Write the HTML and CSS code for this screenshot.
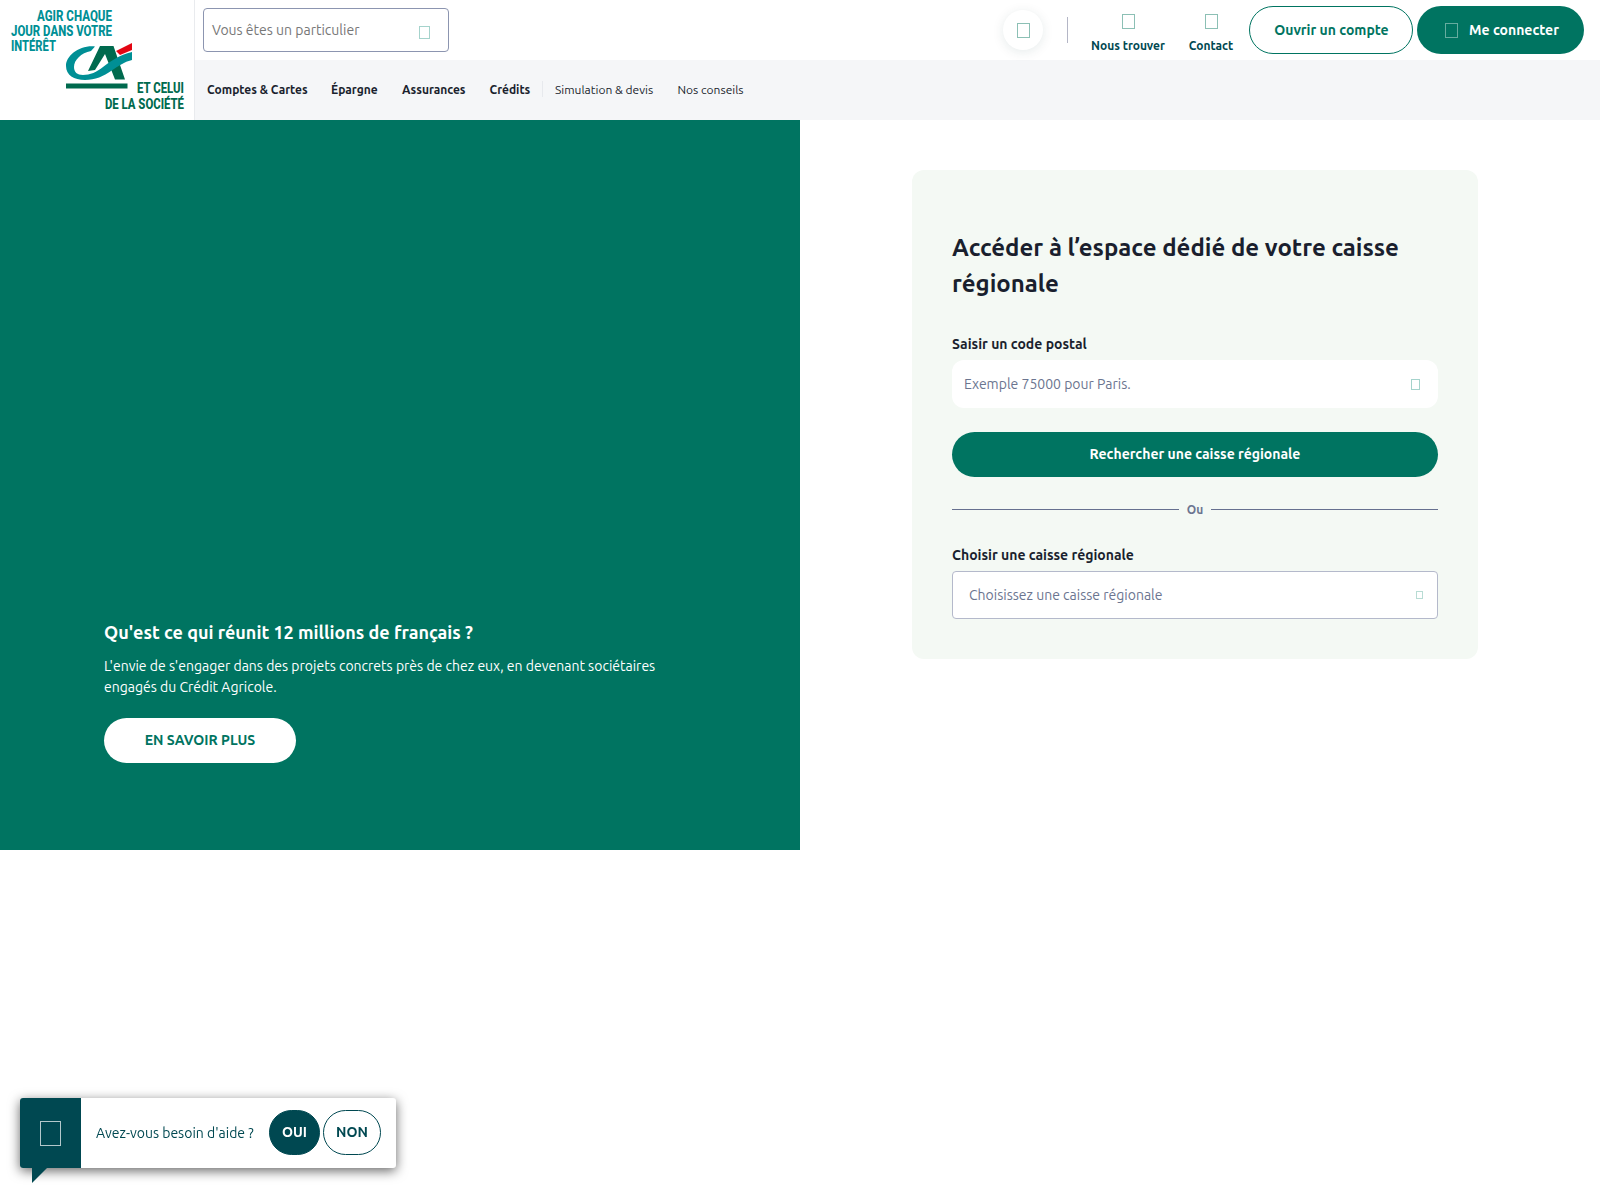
FILE: index.html
```html
<!DOCTYPE html>
<html lang="fr">
<head>
  <meta charset="UTF-8">
  <meta name="viewport" content="width=device-width, initial-scale=1.0">
  <title>Accéder à votre caisse régionale - Crédit Agricole</title>
  <link rel="stylesheet" href="styles.css">
</head>
<body>
  <header class="header">
    <a class="logo" href="#">
      <svg width="194" height="120" viewBox="0 0 194 120" role="img" aria-label="Crédit Agricole">
        <g class="logo-text" fill="#008f95">
          <text x="37" y="21" textLength="75" lengthAdjust="spacingAndGlyphs">AGIR CHAQUE</text>
          <text x="11" y="36" textLength="101" lengthAdjust="spacingAndGlyphs">JOUR DANS VOTRE</text>
          <text x="11" y="51" textLength="45" lengthAdjust="spacingAndGlyphs">INTÉRÊT</text>
        </g>
        <g class="logo-text" fill="#006a4e">
          <text x="137" y="93" textLength="47" lengthAdjust="spacingAndGlyphs">ET CELUI</text>
          <text x="105" y="108.500" textLength="79" lengthAdjust="spacingAndGlyphs">DE LA SOCIÉTÉ</text>
        </g>
        <path fill="#006a4e" d="M100 46h13.500l11.500 33.500h-10L105 54 95 70l-7 1z"/>
        <path fill="#008f95" d="M91 51l4-4.500C79 45 66 56 66 66c0 9 8 14 19 14 10 0 19-4 26-9 7-5 13-9 21-11v-8c-13 3-21 9-29 15-6 5-13 8-20 8-6 0-9-3-9-8 0-7 7-14 17-16z"/>
        <path fill="#e30613" d="M116 51l16-8v7l-12 5z"/>
        <path fill="#006a4e" d="M66 83.500h61.500v5H66z"/>
      </svg>
    </a>
    <div class="header-main">
      <div class="topbar">
        <div class="profile-select"><span>Vous êtes un particulier</span><i class="glyph glyph-s"></i></div>
        <div class="actions">
          <button class="search" aria-label="Rechercher"><i class="glyph"></i></button>
          <span class="separator"></span>
          <a class="action find" href="#"><i class="glyph"></i><span>Nous trouver</span></a>
          <a class="action contact" href="#"><i class="glyph"></i><span>Contact</span></a>
          <a class="btn btn-outline" href="#">Ouvrir un compte</a>
          <a class="btn btn-login" href="#"><i class="glyph"></i><span>Me connecter</span></a>
        </div>
      </div>
      <nav class="nav">
        <a class="n1" href="#">Comptes &amp; Cartes</a>
        <a class="n2" href="#">Épargne</a>
        <a class="n3" href="#">Assurances</a>
        <a class="n4" href="#">Crédits</a>
        <span class="nav-sep"></span>
        <a class="light n5" href="#">Simulation &amp; devis</a>
        <a class="light n6" href="#">Nos conseils</a>
      </nav>
    </div>
  </header>

  <main class="page">
    <section class="hero">
      <h2>Qu'est ce qui réunit 12 millions de français ?</h2>
      <p>L'envie de s'engager dans des projets concrets près de chez eux, en devenant sociétaires<br>engagés du Crédit Agricole.</p>
      <a class="hero-btn" href="#">EN SAVOIR PLUS</a>
    </section>

    <section class="access">
      <form class="card">
        <h1>Accéder à l’espace dédié de votre caisse<br>régionale</h1>
        <label>Saisir un code postal</label>
        <div class="field"><span>Exemple 75000 pour Paris.</span><i class="glyph glyph-xs"></i></div>
        <button type="button" class="submit">Rechercher une caisse régionale</button>
        <div class="or"><span>Ou</span></div>
        <label>Choisir une caisse régionale</label>
        <div class="field field-select"><span>Choisissez une caisse régionale</span><i class="glyph glyph-xxs"></i></div>
      </form>
    </section>
  </main>

  <!-- Aide -->
  <aside class="help">
    <div class="help-icon"><i class="glyph glyph-l"></i></div>
    <span class="help-text">Avez-vous besoin d'aide ?</span>
    <button class="help-btn yes">OUI</button>
    <button class="help-btn no">NON</button>
  </aside>
</body>
</html>
```
FILE: styles.css
```css
* {
  box-sizing: border-box;
}
body {
  margin: 0;
  min-height: 100vh;
  background: #fff;
  color: #1a1f2e;
  font-family: Ubuntu, "Open Sans", "Noto Sans", sans-serif;
  font-size: 14px;
}
a {
  text-decoration: none;
  color: inherit;
  white-space: nowrap;
}
button {
  font: inherit;
  border: none;
  padding: 0;
}

/* missing icon font boxes */
.glyph {
  display: block;
  flex: none;
  width: 13px;
  height: 15px;
  border: 1px solid #8cc0b5;
}
.glyph-s { width: 11px; height: 13px; border-color: #a5d3cc; }
.glyph-xs { width: 9px; height: 11px; border-color: #a5d3cc; }
.glyph-xxs { width: 7px; height: 8px; border-color: #b8dcd4; }
.glyph-l { width: 21px; height: 25px; border-color: #b3c8cb; }

/* header */
.header {
  display: flex;
  height: 120px;
}
.logo {
  width: 195px;
  border-right: 1px solid #e9ebee;
}
.logo svg { display: block; }
.logo-text {
  font-family: Roboto, sans-serif;
  font-size: 14px;
  font-weight: 800;
}
.header-main { flex: 1; }
.topbar {
  display: flex;
  justify-content: space-between;
  height: 60px;
  padding: 0 16px 0 8px;
}
.profile-select {
  display: flex;
  align-items: center;
  justify-content: space-between;
  width: 246px;
  height: 44px;
  margin-top: 8px;
  padding: 0 18px 0 8px;
  border: 1px solid #8c95b0;
  border-radius: 4px;
  color: #777;
}
.profile-select .glyph { margin-top: 4px; }
.actions {
  display: flex;
  align-items: center;
}
.search {
  display: flex;
  align-items: center;
  justify-content: center;
  width: 40px;
  height: 40px;
  border-radius: 50%;
  background: #fff;
  box-shadow: 0 2px 12px rgba(0, 60, 60, .1);
}
.separator {
  width: 1px;
  height: 26px;
  margin: 0 23px 0 24px;
  background: #b4b6c6;
}
.action {
  display: flex;
  flex-direction: column;
  align-items: center;
  gap: 9px;
  height: 32px;
  margin-right: 24px;
  color: #004851;
  font-size: 12px;
  font-weight: 600;
  line-height: 16px;
}
.action.find { width: 74px; }
.action.contact {
  width: 44px;
  margin-right: 16px;
}
.btn {
  display: flex;
  align-items: center;
  justify-content: center;
  height: 48px;
  border-radius: 24px;
  font-weight: 600;
}
.btn-outline {
  width: 164px;
  margin-right: 4px;
  padding-left: 1px;
  border: 1px solid #007461;
  color: #007461;
}
.btn-login {
  gap: 11px;
  width: 167px;
  padding-left: 3px;
  background: #007461;
  color: #fff;
}
.btn-login .glyph { border-color: #66ac9f; }

.nav {
  display: flex;
  align-items: center;
  gap: 24px;
  height: 60px;
  padding: 0 0 2px 12px;
  background: #f5f6f8;
  font-size: 12px;
  font-weight: 600;
}
.nav .light {
  color: #1a1f2e;
  font-weight: 400;
}
.nav-sep {
  width: 1px;
  height: 16px;
  margin: 0 -12px;
  background: #e7e9ed;
}
.n1 { width: 100px; }
.n2 { width: 47px; }
.n3 { width: 63.500px; }
.n4 { width: 40.500px; }
.n5 { width: 98.500px; }

/* page */
.page {
  display: grid;
  grid-template-columns: 1fr 1fr;
  align-items: start;
}
.hero {
  display: flex;
  flex-direction: column;
  justify-content: flex-end;
  align-items: flex-start;
  height: 730px;
  padding: 0 104px 87px;
  background: #007461;
  color: #fff;
}
.hero h2 {
  margin: 0 0 10px;
  font-size: 18px;
  font-weight: 600;
  line-height: 27px;
  white-space: nowrap;
}
.hero p {
  margin: 0 0 20px;
  line-height: 21px;
  white-space: nowrap;
}
.hero-btn {
  width: 192px;
  height: 45px;
  border-radius: 23px;
  background: #fff;
  color: #007461;
  font-weight: 600;
  line-height: 44px;
  text-align: center;
}
.access {
  padding: 50px 0 0 112px;
}
.card {
  width: 566px;
  height: 489px;
  padding: 60px 40px 40px;
  border-radius: 12px;
  background: #f4f9f4;
}
.card h1 {
  margin: 0 0 32px;
  font-size: 24px;
  font-weight: 600;
  line-height: 36px;
  white-space: nowrap;
}
.card label {
  display: block;
  height: 26px;
  font-weight: 600;
  line-height: 20px;
}
.field {
  display: flex;
  align-items: center;
  justify-content: space-between;
  height: 48px;
  padding: 0 18px 0 12px;
  border-radius: 12px;
  background: #fff;
  color: #6b7590;
}
.field-select {
  padding: 0 14px 0 16px;
  border: 1px solid #b4b9cb;
  border-radius: 4px;
}
.submit {
  display: block;
  width: 100%;
  height: 45px;
  margin: 24px 0;
  padding-bottom: 2px;
  border-radius: 23px;
  background: #007461;
  color: #fff;
  font-weight: 600;
}
.or {
  display: flex;
  align-items: center;
  gap: 8px;
  height: 16px;
  margin-bottom: 28px;
  color: #6b7590;
  font-size: 12px;
  font-weight: 600;
}
.or::before,
.or::after {
  content: "";
  flex: 1;
  height: 1px;
  background: #66708f;
}

/* help bubble */
.help {
  position: fixed;
  left: 20px;
  bottom: 32px;
  display: flex;
  align-items: center;
  width: 376px;
  height: 70px;
  border-radius: 3px;
  background: #fff;
  color: #004851;
  box-shadow: 0 3px 12px rgba(0, 0, 0, .6);
}
.help-icon {
  display: flex;
  align-items: center;
  justify-content: center;
  width: 61px;
  height: 70px;
  border-radius: 3px 0 0 3px;
  background: #004851;
}
.help-icon::after {
  content: "";
  position: absolute;
  left: 12px;
  top: 70px;
  border-top: 15px solid #004851;
  border-right: 15px solid transparent;
}
.help-text {
  width: 158px;
  margin: 0 15px;
  white-space: nowrap;
}
.help-btn {
  height: 45px;
  margin-bottom: 2px;
  border: 1px solid #004851;
  border-radius: 23px;
  background: #fff;
  color: #004851;
  font-weight: 700;
}
.help-btn.yes {
  width: 51px;
  margin-right: 3px;
  background: #004851;
  color: #fff;
}
.help-btn.no { width: 58px; }
```
